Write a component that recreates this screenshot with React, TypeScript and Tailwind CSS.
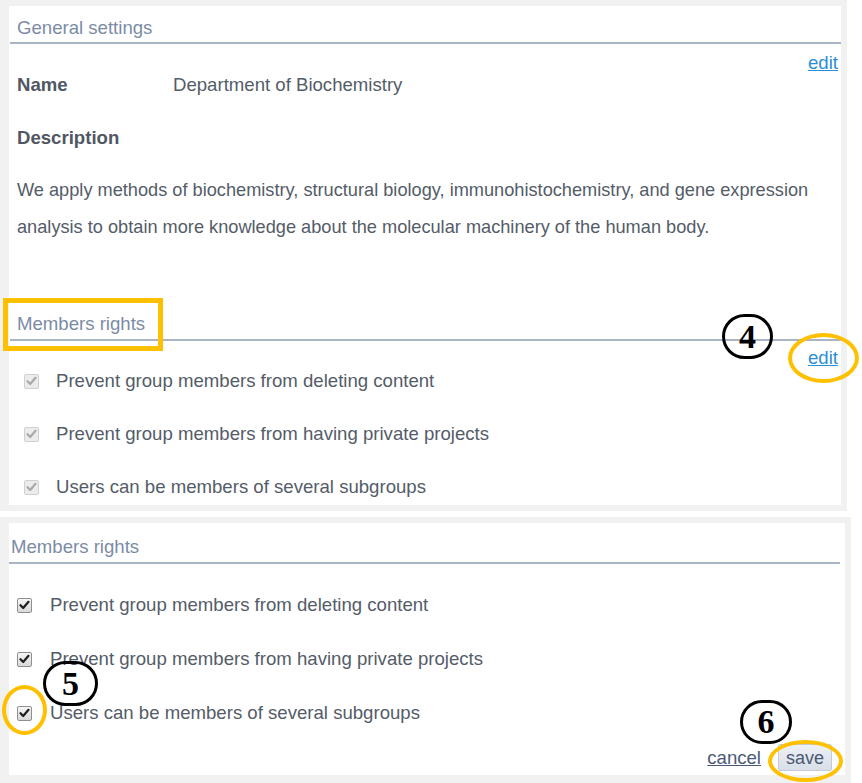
import type { ReactNode } from "react";

const rights = [
  "Prevent group members from deleting content",
  "Prevent group members from having private projects",
  "Users can be members of several subgroups",
];

function CheckBox({ disabled }: { disabled?: boolean }) {
  return (
    <span
      className={
        disabled
          ? "flex h-[15px] w-[15px] shrink-0 items-center justify-center rounded-[2px] border border-[#d0d0d0] bg-[#ececec]"
          : "flex h-[15px] w-[15px] shrink-0 items-center justify-center rounded-[2px] border border-[#8f8f8f] bg-gradient-to-b from-[#f6f6f6] to-[#d9d9d9]"
      }
    >
      <svg width="11" height="10" viewBox="0 0 11 10">
        <path
          d="M1.5 5.2 L4.2 8 L9.5 1.8"
          fill="none"
          stroke={disabled ? "#a9a9a9" : "#1f1f1f"}
          strokeWidth="2.2"
          strokeLinecap="round"
          strokeLinejoin="round"
        />
      </svg>
    </span>
  );
}

function SectionTitle({ children, className }: { children: ReactNode; className: string }) {
  return (
    <div className={`border-b-2 border-[#a9b5c7] text-[18.6px] leading-[20px] text-[#7b8ca6] ${className}`}>
      {children}
    </div>
  );
}

function Circled({ n, className }: { n: string; className: string }) {
  return (
    <div
      className={`absolute flex items-center justify-center rounded-full border-[3px] border-black font-['Liberation_Serif',serif] text-[34px] font-bold leading-none text-black ${className}`}
    >
      {n}
    </div>
  );
}

function Ring({ className }: { className: string }) {
  return <div className={`absolute rounded-[50%] border-[4px] border-[#ffc000] ${className}`} />;
}

export default function App() {
  return (
    <div className="relative h-[783px] w-[862px] overflow-hidden bg-white font-['Liberation_Sans',Arial,sans-serif] text-[18.6px] text-[#545c68]">
      {/* top screenshot */}
      <div className="w-[847px] bg-[#f1f1f1] pb-[6px] pl-[9px] pr-[6px] pt-[6px]">
        <div className="flex h-[499px] flex-col bg-white">
          <SectionTitle className="ml-[1px] pb-[4px] pl-[7px] pt-[12px]">General settings</SectionTitle>
          <div className="mt-[9px] flex justify-end pr-[3px] leading-[20px]">
            <a className="text-[#2b8ed6] underline">edit</a>
          </div>
          <div className="mt-[2px] flex pl-[8px] leading-[20px]">
            <span className="w-[156px] font-bold text-[#4f5763]">Name</span>
            <span>Department of Biochemistry</span>
          </div>
          <div className="mt-[33px] pl-[8px] font-bold leading-[20px] text-[#4f5763]">Description</div>
          <p className="mt-[24px] w-[830px] pl-[8px] text-[18.2px] leading-[37px]">
            We apply methods of biochemistry, structural biology, immunohistochemistry, and gene expression analysis to
            obtain more knowledge about the molecular machinery of the human body.
          </p>
          <SectionTitle className="ml-[1px] mt-[68px] pb-[5px] pl-[7px]">Members rights</SectionTitle>
          <div className="mt-[7px] flex justify-end pr-[3px] leading-[20px]">
            <a className="text-[#2b8ed6] underline">edit</a>
          </div>
          <div className="mt-[3px] flex flex-col gap-[33px] pl-[15px]">
            {rights.map((r) => (
              <div key={r} className="flex h-[20px] items-center gap-[17px] leading-[20px]">
                <CheckBox disabled />
                <span>{r}</span>
              </div>
            ))}
          </div>
        </div>
      </div>

      {/* gap between screenshots */}
      <div className="h-[6px]" />

      {/* bottom screenshot */}
      <div className="h-[266px] w-[851px] bg-[#f1f1f1] pl-[9px] pr-[6px] pt-[6px]">
        <div className="flex h-[252px] flex-col bg-white">
          <SectionTitle className="mr-[5px] pb-[5px] pl-[2px] pt-[14px]">Members rights</SectionTitle>
          <div className="mt-[31px] flex flex-col gap-[34px] pl-[8px]">
            {rights.map((r) => (
              <div key={r} className="flex h-[20px] items-center gap-[18px] leading-[20px]">
                <CheckBox />
                <span>{r}</span>
              </div>
            ))}
          </div>
          <div className="mt-[21px] flex items-center justify-end gap-[17px] pr-[13px]">
            <a className="text-[#4b5979] underline">cancel</a>
            <button className="h-[27px] w-[54px] rounded-[2px] border border-[#c3cbd7] bg-gradient-to-b from-[#eef1f5] to-[#d9dfe8] text-[18px] leading-[20px] text-[#4b5873]">
              save
            </button>
          </div>
        </div>
      </div>

      {/* annotations */}
      <div className="absolute left-[3px] top-[298px] h-[53px] w-[160px] border-[5px] border-[#ffc000]" />
      <Circled n="4" className="left-[722px] top-[314px] h-[45px] w-[51px]" />
      <Ring className="left-[788px] top-[333px] h-[50px] w-[71px]" />
      <Circled n="5" className="left-[43px] top-[661px] h-[45px] w-[55px]" />
      <Ring className="left-[2px] top-[685px] h-[50px] w-[45px]" />
      <Circled n="6" className="left-[740px] top-[700px] h-[44px] w-[52px]" />
      <Ring className="left-[768px] top-[740px] h-[42px] w-[75px]" />
    </div>
  );
}
